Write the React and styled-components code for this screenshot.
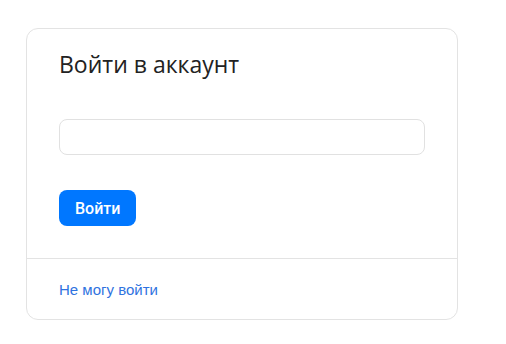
import React from 'react'
import styled, { createGlobalStyle } from 'styled-components'

const Global = createGlobalStyle`
  html, body { margin: 0; padding: 0; background: #fff; }
  body { font-family: "Liberation Sans", Arial, sans-serif; }
`

const Page = styled.div`
  padding: 28px 0 0 26px;
`

const Card = styled.div`
  width: 430px;
  border: 1px solid #e3e3e3;
  border-radius: 12px;
  background: #fff;
  box-sizing: content-box;
`

const Body = styled.div`
  padding: 20px 32px 32px 32px;
  border-bottom: 1px solid #e3e3e3;
`

const Title = styled.h1`
  margin: 0;
  font-family: "Open Sans", sans-serif;
  font-weight: 500;
  font-size: 23px;
  line-height: 30px;
  color: #222;
`

const Input = styled.input`
  display: block;
  box-sizing: border-box;
  width: 366px;
  height: 36px;
  margin-top: 40px;
  border: 1px solid #e1e1e1;
  border-radius: 8px;
  outline: none;
  padding: 0 12px;
  font-size: 15px;
`

const Button = styled.button`
  display: block;
  margin-top: 35px;
  height: 36px;
  padding: 0 16px;
  border: none;
  border-radius: 8px;
  background: #0077ff;
  color: #fff;
  font-family: Roboto, "Liberation Sans", sans-serif;
  font-weight: 500;
  font-size: 16px;
`

const Footer = styled.div`
  height: 60px;
  display: flex;
  align-items: center;
  padding: 0 32px;
`

const Link = styled.a`
  font-size: 15px;
  color: #2f73e0;
  text-decoration: none;
`

export default function App() {
  return (
    <>
      <Global />
      <Page>
        <Card>
          <Body>
            <Title>Войти в аккаунт</Title>
            <Input type="text" />
            <Button>Войти</Button>
          </Body>
          <Footer>
            <Link href="#">Не могу войти</Link>
          </Footer>
        </Card>
      </Page>
    </>
  )
}
